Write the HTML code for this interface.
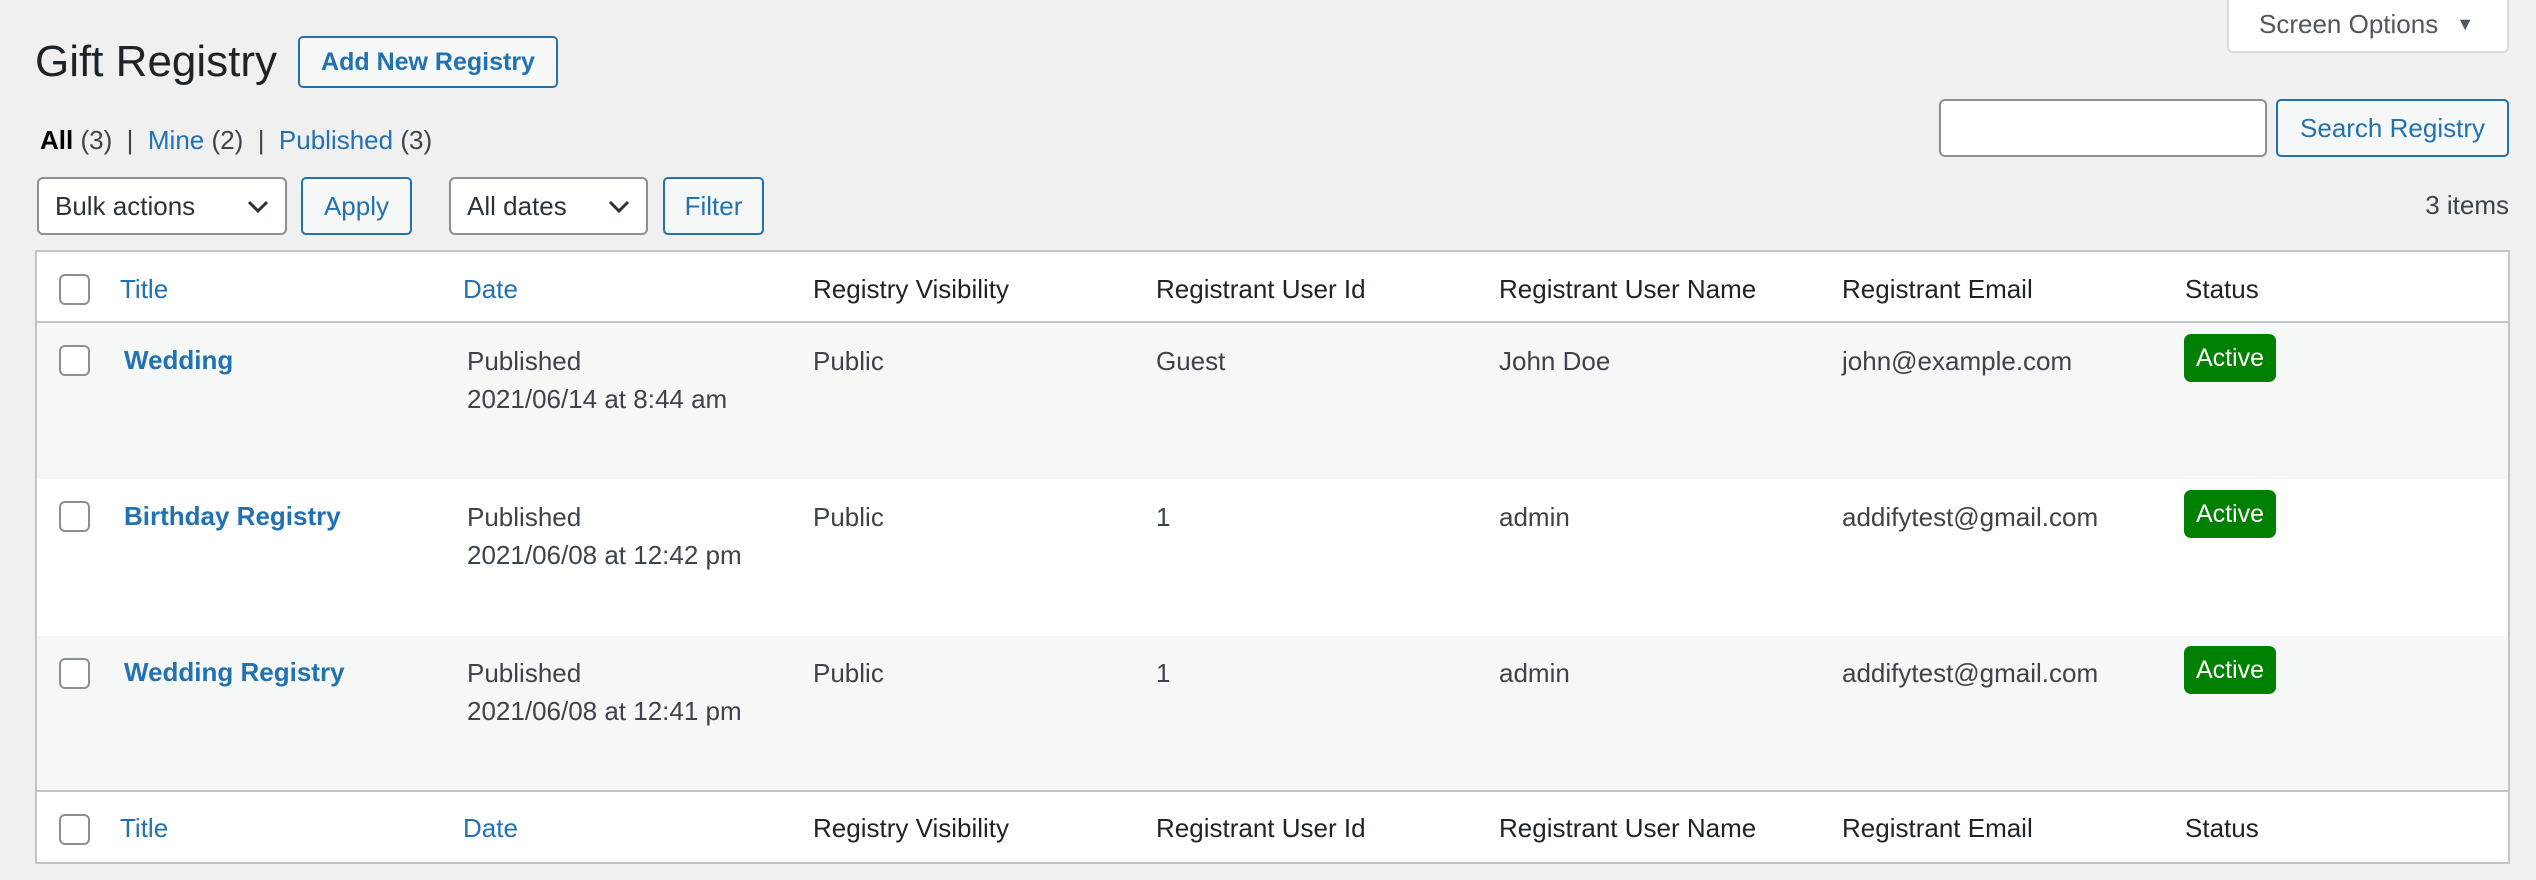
<!DOCTYPE html>
<html><head><meta charset="utf-8"><style>
*{box-sizing:border-box;margin:0;padding:0}
body{width:2536px;height:880px;background:#f0f0f1;font-family:"Liberation Sans",sans-serif;font-size:26px;color:#3c434a;position:relative;overflow:hidden}
.a{position:absolute;white-space:nowrap}
.btn{position:absolute;border:2px solid #2271b1;border-radius:5px;background:#f6f7f7;color:#2271b1;display:flex;align-items:center;justify-content:center}
.sel{position:absolute;border:2px solid #8c8f94;border-radius:6px;background:#fff;color:#2c3338;display:flex;align-items:center;padding-left:16px}
.sel svg{position:absolute;right:16px;top:20px}
.blue{color:#2271b1}
.cb{position:absolute;left:59px;width:31px;height:31px;border:2px solid #8c8f94;border-radius:6px;background:#fff}
.hd{color:#1d2327}
.b{font-weight:bold;color:#2271b1}
.act{position:absolute;left:2184px;width:92px;height:48px;background:#008000;color:#fff;border-radius:7px;display:flex;align-items:center;justify-content:center;font-size:25px}
</style></head><body>
<div class="a" style="left:35px;top:36px;font-size:44px;color:#1d2327;line-height:52px">Gift Registry</div>
<div class="btn" style="left:298px;top:36px;width:260px;height:52px;font-weight:bold;font-size:25px">Add New Registry</div>

<div style="position:absolute;left:2227px;top:-4px;width:282px;height:57px;background:#fff;border:2px solid #dcdcde;border-radius:0 0 6px 6px;color:#50575e;display:flex;align-items:center;padding-left:30px;font-size:26px">Screen Options <span style="font-size:18px;margin-left:18px">▼</span></div>

<div class="a" style="left:40px;top:124px;line-height:32px"><span style="color:#000;font-weight:bold">All</span> (3) &nbsp;|&nbsp; <span class="blue">Mine</span> (2) &nbsp;|&nbsp; <span class="blue">Published</span> (3)</div>

<div style="position:absolute;left:1939px;top:99px;width:328px;height:58px;border:2px solid #8c8f94;border-radius:6px;background:#fff"></div>
<div class="btn" style="left:2276px;top:99px;width:233px;height:58px">Search Registry</div>

<div class="sel" style="left:37px;top:177px;width:250px;height:58px">Bulk actions<svg width="22" height="16" viewBox="0 0 22 16"><path d="M2 3l9 9 9-9" stroke="#2c3338" stroke-width="3" fill="none"/></svg></div>
<div class="btn" style="left:301px;top:177px;width:111px;height:58px">Apply</div>
<div class="sel" style="left:449px;top:177px;width:199px;height:58px">All dates<svg width="22" height="16" viewBox="0 0 22 16"><path d="M2 3l9 9 9-9" stroke="#2c3338" stroke-width="3" fill="none"/></svg></div>
<div class="btn" style="left:663px;top:177px;width:101px;height:58px">Filter</div>
<div class="a" style="right:27px;top:190px;line-height:30px">3 items</div>

<div style="position:absolute;left:35px;top:250px;width:2475px;height:614px;background:#fff;border:2px solid #c3c4c7"></div>
<div style="position:absolute;left:37px;top:321px;width:2471px;height:2px;background:#c3c4c7"></div>
<div style="position:absolute;left:37px;top:323px;width:2471px;height:156px;background:#f6f7f7"></div>
<div style="position:absolute;left:37px;top:636px;width:2471px;height:155px;background:#f6f7f7"></div>
<div style="position:absolute;left:37px;top:790px;width:2471px;height:2px;background:#c3c4c7"></div>

<!-- header -->
<div class="cb" style="top:274px"></div>
<div class="a blue" style="left:120px;top:273px;line-height:32px">Title</div>
<div class="a blue" style="left:463px;top:273px;line-height:32px">Date</div>
<div class="a hd" style="left:813px;top:273px;line-height:32px">Registry Visibility</div>
<div class="a hd" style="left:1156px;top:273px;line-height:32px">Registrant User Id</div>
<div class="a hd" style="left:1499px;top:273px;line-height:32px">Registrant User Name</div>
<div class="a hd" style="left:1842px;top:273px;line-height:32px">Registrant Email</div>
<div class="a hd" style="left:2185px;top:273px;line-height:32px">Status</div>

<!-- row1 -->
<div class="cb" style="top:345px"></div>
<div class="a b" style="left:124px;top:344px;line-height:32px">Wedding</div>
<div class="a" style="left:467px;top:342px;line-height:38px">Published<br>2021/06/14 at 8:44 am</div>
<div class="a" style="left:813px;top:342px;line-height:38px">Public</div>
<div class="a" style="left:1156px;top:342px;line-height:38px">Guest</div>
<div class="a" style="left:1499px;top:342px;line-height:38px">John Doe</div>
<div class="a" style="left:1842px;top:342px;line-height:38px">john@example.com</div>
<div class="act" style="top:334px">Active</div>

<!-- row2 -->
<div class="cb" style="top:501px"></div>
<div class="a b" style="left:124px;top:500px;line-height:32px">Birthday Registry</div>
<div class="a" style="left:467px;top:498px;line-height:38px">Published<br>2021/06/08 at 12:42 pm</div>
<div class="a" style="left:813px;top:498px;line-height:38px">Public</div>
<div class="a" style="left:1156px;top:498px;line-height:38px">1</div>
<div class="a" style="left:1499px;top:498px;line-height:38px">admin</div>
<div class="a" style="left:1842px;top:498px;line-height:38px">addifytest@gmail.com</div>
<div class="act" style="top:490px">Active</div>

<!-- row3 -->
<div class="cb" style="top:658px"></div>
<div class="a b" style="left:124px;top:656px;line-height:32px">Wedding Registry</div>
<div class="a" style="left:467px;top:654px;line-height:38px">Published<br>2021/06/08 at 12:41 pm</div>
<div class="a" style="left:813px;top:654px;line-height:38px">Public</div>
<div class="a" style="left:1156px;top:654px;line-height:38px">1</div>
<div class="a" style="left:1499px;top:654px;line-height:38px">admin</div>
<div class="a" style="left:1842px;top:654px;line-height:38px">addifytest@gmail.com</div>
<div class="act" style="top:646px">Active</div>

<!-- footer -->
<div class="cb" style="top:814px"></div>
<div class="a blue" style="left:120px;top:812px;line-height:32px">Title</div>
<div class="a blue" style="left:463px;top:812px;line-height:32px">Date</div>
<div class="a hd" style="left:813px;top:812px;line-height:32px">Registry Visibility</div>
<div class="a hd" style="left:1156px;top:812px;line-height:32px">Registrant User Id</div>
<div class="a hd" style="left:1499px;top:812px;line-height:32px">Registrant User Name</div>
<div class="a hd" style="left:1842px;top:812px;line-height:32px">Registrant Email</div>
<div class="a hd" style="left:2185px;top:812px;line-height:32px">Status</div>
</body></html>
